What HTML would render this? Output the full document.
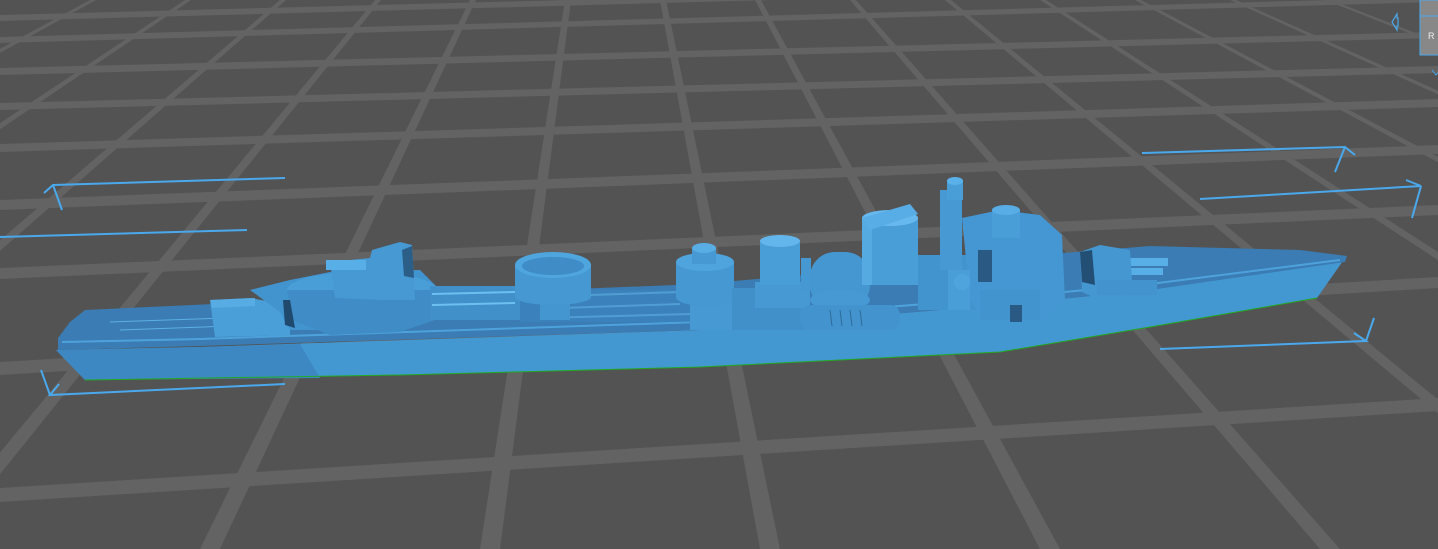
<!DOCTYPE html>
<html><head><meta charset="utf-8"><style>
html,body{margin:0;padding:0;background:#535353;overflow:hidden}
svg{display:block}
</style></head><body>
<svg width="1438" height="549" viewBox="0 0 1438 549" xmlns="http://www.w3.org/2000/svg">
<rect width="1438" height="549" fill="#535353"/>
<g fill="#636363">
<polygon points="0,15 1438,-23 1438,-18 0,21"/>
<polygon points="0,37 1438,-3 1438,2 0,43"/>
<polygon points="0,68 1438,32 1438,38 0,75"/>
<polygon points="0,103 1438,66 1438,73 0,110"/>
<polygon points="0,144 1438,99 1438,107 0,152"/>
<polygon points="0,200 1438,145 1438,154 0,210"/>
<polygon points="0,268 1438,205 1438,215 0,279"/>
<polygon points="0,362 1438,277 1438,288 0,375"/>
<polygon points="0,488 1438,398 1438,411 0,502"/>
</g>
<g fill="#636363">
<polygon points="-100,0 -94,0 -1460,549 -1480,549"/>
<polygon points="-5,0 1,0 -1180,549 -1200,549"/>
<polygon points="90,0 96,0 -900,549 -920,549"/>
<polygon points="185,0 191,0 -620,549 -640,549"/>
<polygon points="280,0 286,0 -340,549 -360,549"/>
<polygon points="375,0 381,0 -60,549 -80,549"/>
<polygon points="470,0 476,0 220,549 200,549"/>
<polygon points="565,0 571,0 500,549 480,549"/>
<polygon points="660,0 666,0 780,549 760,549"/>
<polygon points="755,0 761,0 1060,549 1040,549"/>
<polygon points="850,0 856,0 1340,549 1320,549"/>
<polygon points="945,0 951,0 1620,549 1600,549"/>
<polygon points="1040,0 1046,0 1900,549 1880,549"/>
<polygon points="1135,0 1141,0 2180,549 2160,549"/>
<polygon points="1230,0 1236,0 2460,549 2440,549"/>
<polygon points="1325,0 1331,0 2740,549 2720,549"/>
<polygon points="1420,0 1426,0 3020,549 3000,549"/>
</g>

<g stroke="#4aa8ec" stroke-width="2" fill="none">
<polyline points="285,178 53,185 44,193"/><line x1="53" y1="185" x2="62" y2="210"/>
<line x1="0" y1="237" x2="247" y2="230"/>
<polyline points="285,384 50,395 59,384"/><line x1="50" y1="395" x2="41" y2="370"/>
<polyline points="1142,153 1345,147 1355,155"/><line x1="1345" y1="147" x2="1335" y2="172"/>
<polyline points="1200,199 1421,186 1406,180"/><line x1="1421" y1="186" x2="1412" y2="218"/>
<polyline points="1160,349 1366,341 1354,333"/><line x1="1366" y1="341" x2="1374" y2="318"/>
<path d="M1397,14 L1392,22 L1397,30 L1397,26 L1398,26 L1398,18 L1397,18Z" stroke-width="1.2"/>
</g>
<rect x="1420" y="0" width="20" height="55" fill="#888" stroke="#4aa8ec" stroke-width="1"/>
<line x1="1420" y1="16" x2="1438" y2="16" stroke="#4aa8ec"/>
<text x="1428" y="39" font-family="Liberation Sans, sans-serif" font-size="9" fill="#eee">R</text>
<path d="M1432,70 l4,5 l4,-5" stroke="#4aa8ec" fill="none"/>

<polygon fill="#4498d2" points="56,350 200,347 700,330 1000,305 1150,290 1345,258 1317,298 1150,327 1000,352 700,367 400,375 85,380"/>
<polygon fill="#3d88c2" points="56,350 200,347 300,344 320,378 85,380"/>
<polyline fill="none" stroke="#22aa22" stroke-width="1" points="85,380 400,375 700,367 1000,352 1150,327 1317,298"/>
<polygon fill="#3a7cb3" points="85,310 300,300 700,284 1000,258 1150,246 1300,250 1347,256 1345,262 1150,290 1000,305 700,330 200,346 58,350 58,338 70,322"/>
<polyline fill="none" stroke="#4ea2dc" stroke-width="2" points="62,342 200,339 700,322 1000,298 1150,284 1340,260"/>
<polyline fill="none" stroke="#5ab0e6" stroke-width="1" points="110,322 400,312"/>
<polyline fill="none" stroke="#5ab0e6" stroke-width="1" points="120,330 400,320"/>

<polygon fill="#4b9fd8" points="210,300 250,298 290,305 290,335 215,337"/>
<polygon fill="#58ace4" points="210,300 255,298 255,306 212,308"/>
<polygon fill="#4294cf" points="250,290 290,280 330,272 420,270 440,290 435,320 400,330 290,330 280,312"/>
<ellipse cx="362" cy="290" rx="75" ry="18" fill="#4a9ed8"/>
<polygon fill="#3f8cc6" points="287,290 437,290 435,320 400,332 330,335 292,320"/>
<polygon fill="#4699d3" points="330,262 370,258 372,250 400,242 412,245 415,300 380,300 335,298"/>
<polygon fill="#2c5f88" points="402,250 412,246 414,278 404,276"/>
<rect x="326" y="260" width="40" height="10" fill="#58aee6"/>
<polygon fill="#1f4a6e" points="283,300 290,300 295,328 285,325"/>
<rect x="430" y="286" width="90" height="34" fill="#4190ca"/>
<g stroke="#6cc0f0" stroke-width="2"><line x1="432" y1="294" x2="515" y2="292"/><line x1="432" y1="305" x2="515" y2="303"/><line x1="560" y1="296" x2="680" y2="292"/><line x1="560" y1="308" x2="680" y2="304"/><line x1="540" y1="318" x2="690" y2="314"/></g>
<rect x="520" y="290" width="170" height="32" fill="#3c86c0" opacity="0.6"/>
<rect x="540" y="290" width="30" height="30" fill="#4496d0"/>
<rect x="515" y="265" width="76" height="32" fill="#4598d2"/>
<ellipse cx="553" cy="297" rx="38" ry="8" fill="#4598d2"/>
<ellipse cx="553" cy="265" rx="38" ry="13" fill="#4fa5de"/>
<ellipse cx="553" cy="266" rx="31" ry="9" fill="#3f8cc6"/>
<rect x="690" y="295" width="42" height="35" fill="#4699d3"/>
<rect x="676" y="262" width="58" height="36" fill="#4598d2"/>
<ellipse cx="705" cy="297" rx="29" ry="9" fill="#4598d2"/>
<ellipse cx="705" cy="262" rx="29" ry="9" fill="#4fa4dd"/>
<rect x="692" y="248" width="24" height="16" fill="#4699d3"/>
<ellipse cx="704" cy="248" rx="12" ry="5" fill="#58ade5"/>
<rect x="732" y="288" width="75" height="42" fill="#4190ca"/>
<rect x="755" y="282" width="55" height="26" fill="#4699d3"/>
<rect x="760" y="240" width="40" height="45" fill="#4a9ed8"/>
<ellipse cx="780" cy="241" rx="20" ry="6" fill="#63b6ec"/>
<rect x="801" y="258" width="10" height="32" fill="#4598d2"/>
<rect x="810" y="252" width="60" height="58" rx="25" fill="#4597d1"/>
<ellipse cx="840" cy="300" rx="30" ry="10" fill="#4699d3"/>
<rect x="800" y="305" width="100" height="25" rx="10" fill="#4394ce"/>
<g stroke="#2e6a98" stroke-width="1"><line x1="830" y1="310" x2="832" y2="326"/><line x1="840" y1="310" x2="842" y2="326"/><line x1="850" y1="310" x2="852" y2="326"/><line x1="860" y1="310" x2="862" y2="326"/></g>
<rect x="862" y="218" width="56" height="67" fill="#4a9ed8"/>
<rect x="862" y="218" width="10" height="67" fill="#56aae2"/>
<ellipse cx="890" cy="218" rx="28" ry="8" fill="#66b8ee"/>
<polygon fill="#58ade6" points="862,218 910,204 918,214 870,230"/>
<rect x="918" y="255" width="60" height="55" fill="#4294cf"/>
<rect x="940" y="190" width="22" height="80" fill="#4699d3"/>
<rect x="947" y="180" width="16" height="20" fill="#4a9ed8"/>
<ellipse cx="955" cy="181" rx="8" ry="4" fill="#5ab0e8"/>
<polygon fill="#4497d2" points="962,218 1000,210 1040,215 1062,235 1065,300 1040,320 985,322 970,300"/>
<rect x="980" y="290" width="60" height="30" fill="#4294cf"/>
<polygon fill="#2a5a83" points="978,250 992,250 992,282 978,282"/>
<polygon fill="#2a5a83" points="1010,305 1022,305 1022,322 1010,322"/>
<rect x="992" y="210" width="28" height="28" fill="#4a9ed8"/>
<ellipse cx="1006" cy="210" rx="14" ry="5" fill="#58ade6"/>
<rect x="948" y="270" width="22" height="40" fill="#4a9ed8"/>
<ellipse cx="962" cy="282" rx="8" ry="8" fill="#4fa4dd"/>
<rect x="1098" y="258" width="70" height="8" fill="#58aee6"/>
<rect x="1098" y="268" width="65" height="7" fill="#58aee6"/>
<polygon fill="#4597d1" points="1080,252 1100,245 1130,250 1133,295 1095,298 1082,292"/>
<polygon fill="#244f75" points="1080,252 1092,250 1095,285 1082,282"/>
<rect x="1097" y="280" width="60" height="15" fill="#4394ce"/>
</svg>
</body></html>
